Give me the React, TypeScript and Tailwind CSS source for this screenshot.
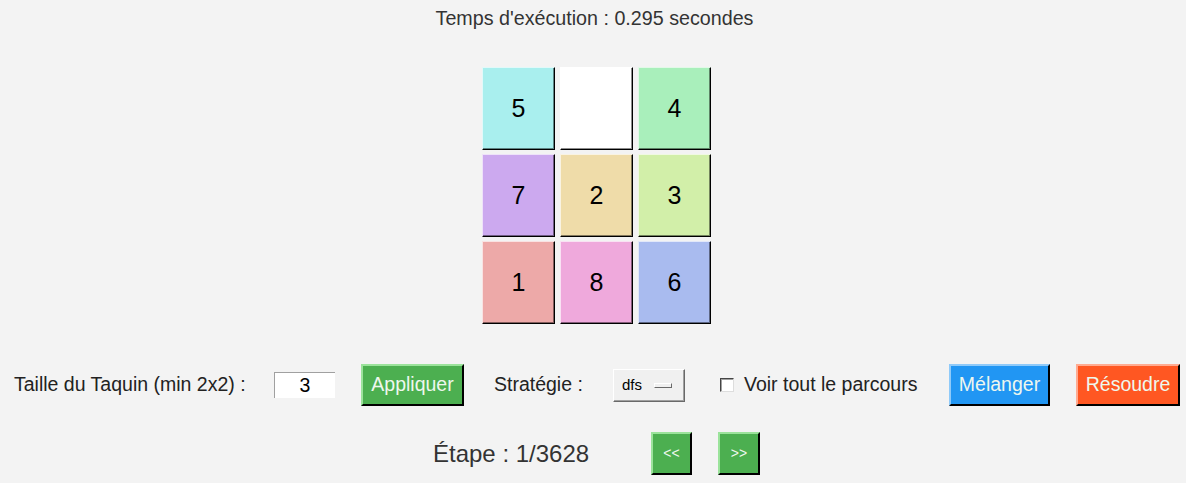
import React from 'react';

const FONT = { fontFamily: '"Liberation Sans", Arial, sans-serif' };

const tiles: { n: number | null; bg: string }[] = [
  { n: 5, bg: 'bg-[#a9efee]' },
  { n: null, bg: 'bg-white' },
  { n: 4, bg: 'bg-[#a9efbb]' },
  { n: 7, bg: 'bg-[#cca9ef]' },
  { n: 2, bg: 'bg-[#efdca9]' },
  { n: 3, bg: 'bg-[#d2efa9]' },
  { n: 1, bg: 'bg-[#eda9a8]' },
  { n: 8, bg: 'bg-[#efa9dc]' },
  { n: 6, bg: 'bg-[#a9bbef]' },
];

// raised tk-style relief: light top/left, black bottom/right
const raised =
  'border border-t-[#ffffffaa] border-l-[#ffffffaa] border-b-black border-r-black shadow-[inset_-1px_-1px_0_rgba(0,0,0,0.45)]';

function TkButton({ label, bg, light, w, h, size }: { label: string; bg: string; light: string; w: string; h: string; size: string }) {
  return (
    <button
      className={`${w} ${h} ${bg} ${size} text-[#eef7ee] flex items-center justify-center border-t-2 border-l-2 ${light} border-b-2 border-r-2 border-b-black border-r-black`}
    >
      {label}
    </button>
  );
}

export default function App() {
  return (
    <div style={FONT} className="w-full h-[483px] bg-[#f3f3f3] flex flex-col text-[#222]">
      {/* Header */}
      <div className="h-[67px] pt-[7px] pl-[3px] text-center text-[19.7px] leading-[22px] text-[#333]">
        Temps d'exécution : 0.295 secondes
      </div>

      {/* Board */}
      <div className="ml-[482px] grid grid-cols-[73px_73px_73px] gap-x-[5px] gap-y-[4px]">
        {tiles.map((t, i) => (
          <div
            key={i}
            className={`h-[83px] ${t.bg} ${raised} flex items-center justify-center text-[25px] text-black`}
          >
            {t.n ?? ''}
          </div>
        ))}
      </div>

      {/* Controls */}
      <div className="mt-[40px] h-[42px] flex items-center pl-[14px] text-[19.5px] whitespace-nowrap">
        <div className="w-[260px]">Taille du Taquin (min 2x2) :</div>
        <div className="w-[61px] h-[26px] bg-white border-t border-l border-[#a0a0a0] border-b-0 border-r-0 flex items-center justify-center text-[19.5px] text-black">
          3
        </div>
        <div className="ml-[26px]">
          <TkButton label="Appliquer" bg="bg-[#4caf50]" light="border-t-[#9be39b] border-l-[#9be39b]" w="w-[103px]" h="h-[42px]" size="text-[19.5px]" />
        </div>
        <div className="ml-[30px] w-[119px]">Stratégie :</div>
        <div className="w-[72px] h-[33px] bg-[#f0f0f0] border border-t-white border-l-white border-b-[#696969] border-r-[#696969] shadow-[inset_-1px_-1px_0_#a0a0a0] flex items-center pl-[8px] gap-[12px]">
          <span className="text-[15px] text-black">dfs</span>
          <span className="w-[18px] h-[5px] bg-[#f0f0f0] border border-t-white border-l-white border-b-[#696969] border-r-[#696969]" />
        </div>
        <div className="ml-[35px] w-[14px] h-[14px] bg-white border border-t-[#444] border-l-[#444] border-b-[#ddd] border-r-[#ddd] shadow-[inset_1px_1px_0_#a0a0a0]" />
        <div className="ml-[10px] w-[205px]">Voir tout le parcours</div>
        <TkButton label="Mélanger" bg="bg-[#2196f3]" light="border-t-[#8fcaf9] border-l-[#8fcaf9]" w="w-[101px]" h="h-[42px]" size="text-[19.5px]" />
        <div className="ml-[26px]">
          <TkButton label="Résoudre" bg="bg-[#ff5722]" light="border-t-[#ffab91] border-l-[#ffab91]" w="w-[104px]" h="h-[42px]" size="text-[19.5px]" />
        </div>
      </div>

      {/* Steps */}
      <div className="mt-[26px] h-[43px] flex items-center pl-[433px] whitespace-nowrap">
        <div className="w-[155px] text-[24px] text-[#333]">Étape : 1/3628</div>
        <div className="ml-[63px]">
          <TkButton label="<<" bg="bg-[#4caf50]" light="border-t-[#9be39b] border-l-[#9be39b]" w="w-[41px]" h="h-[43px]" size="text-[14px]" />
        </div>
        <div className="ml-[26px]">
          <TkButton label=">>" bg="bg-[#4caf50]" light="border-t-[#9be39b] border-l-[#9be39b]" w="w-[42px]" h="h-[43px]" size="text-[14px]" />
        </div>
      </div>
    </div>
  );
}
